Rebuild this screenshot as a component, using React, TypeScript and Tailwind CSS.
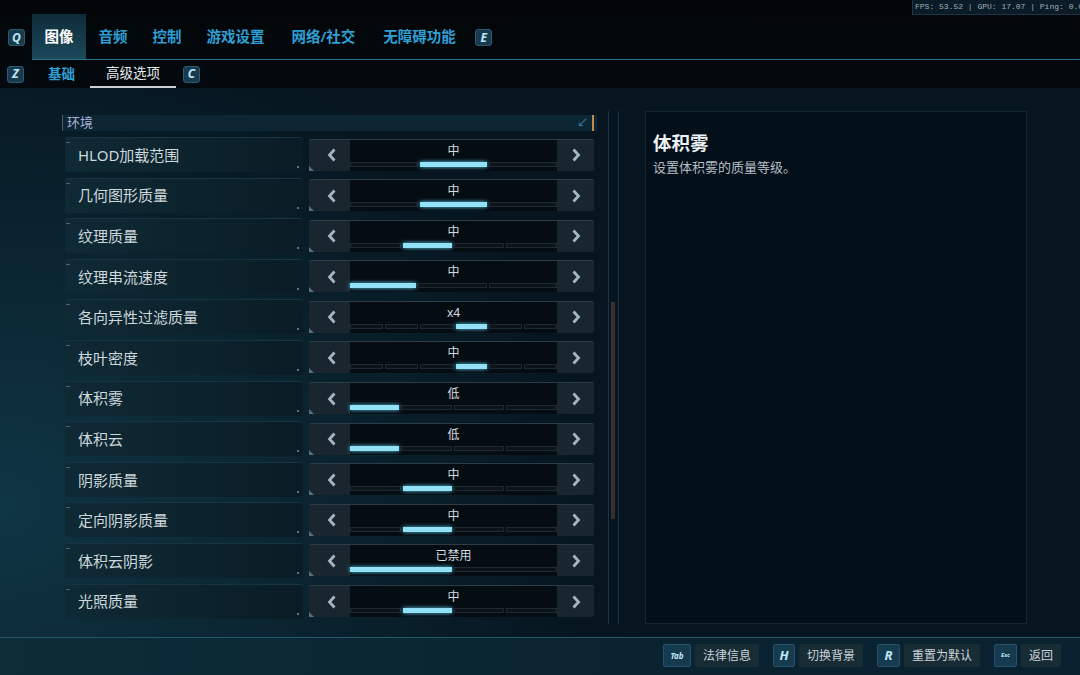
import React from "react";

const rows = [
  { label: "HLOD加载范围", value: "中", segs: 3, active: 1 },
  { label: "几何图形质量", value: "中", segs: 3, active: 1 },
  { label: "纹理质量", value: "中", segs: 4, active: 1 },
  { label: "纹理串流速度", value: "中", segs: 3, active: 0 },
  { label: "各向异性过滤质量", value: "x4", segs: 6, active: 3 },
  { label: "枝叶密度", value: "中", segs: 6, active: 3 },
  { label: "体积雾", value: "低", segs: 4, active: 0 },
  { label: "体积云", value: "低", segs: 4, active: 0 },
  { label: "阴影质量", value: "中", segs: 4, active: 1 },
  { label: "定向阴影质量", value: "中", segs: 4, active: 1 },
  { label: "体积云阴影", value: "已禁用", segs: 2, active: 0 },
  { label: "光照质量", value: "中", segs: 4, active: 1 },
];

const tabs = [
  { label: "图像", cls: "" },
  { label: "音频", cls: "" },
  { label: "控制", cls: "" },
  { label: "游戏设置", cls: "" },
  { label: "网络/社交", cls: "ml-[2px]" },
  { label: "无障碍功能", cls: "ml-[3px]" },
];

const footer = [
  { key: "Tab", label: "法律信息", w: "w-[28px] text-[8px]" },
  { key: "H", label: "切换背景", w: "w-[22px] text-[13px]" },
  { key: "R", label: "重置为默认", w: "w-[23px] text-[13px]" },
  { key: "Esc", label: "返回", w: "w-[23px] text-[6px]" },
];

function KeyBadge({ k }: { k: string }) {
  return (
    <div className="flex h-[17px] w-[17px] items-center justify-center rounded-[3px] border border-[#2b5b72] bg-[#173a4c] text-[12px] font-bold italic text-[#bfe6f8]">
      {k}
    </div>
  );
}

function Chevron({ dir }: { dir: "left" | "right" }) {
  return (
    <svg width="10" height="14" viewBox="0 0 10 14">
      <polyline
        points={dir === "left" ? "7.5,1.5 2.5,7 7.5,12.5" : "2.5,1.5 7.5,7 2.5,12.5"}
        fill="none"
        stroke="#a3b7c2"
        strokeWidth="2.8"
      />
    </svg>
  );
}

function Row({ label, value, segs, active }: (typeof rows)[number]) {
  return (
    <div className="flex h-[35px] items-center">
      <div className="relative ml-[3px] flex h-[35px] w-[238px] items-center rounded-[3px] border-t border-[#173540] bg-[linear-gradient(90deg,#0f2a35_0%,#0c222c_60%,#0a1c25_100%)] pl-[13px] text-[15px] text-[#cdd7dc]">
        <span className="absolute left-[1px] top-[4px] h-[1px] w-[4px] bg-[#4b6470]" />
        <span className="absolute bottom-[4px] right-[4px] h-[2px] w-[2px] bg-[#5a7480]" />
        {label}
      </div>
      <div className="relative ml-[6px] flex h-[32px] w-[285px] rounded-[2px] border-t border-[#2c3b45] bg-[#19262f]">
        <span className="absolute bottom-0 left-0 h-0 w-0 border-b-[5px] border-r-[5px] border-b-[#5b6f7a] border-r-transparent" />
        <div className="flex w-[41px] items-center justify-center pl-[4px]">
          <Chevron dir="left" />
        </div>
        <div className="flex w-[207px] flex-col bg-[#050c12]">
          <div className="flex h-[22px] items-center justify-center text-[12px] text-[#d5dde1]">{value}</div>
          <div className="flex h-[5px] gap-[2px]">
            {Array.from({ length: segs }).map((_, i) =>
              i === active ? (
                <div key={i} className="flex-1 bg-[#93e1f6] shadow-[0_0_4px_#5cc8ea]" />
              ) : (
                <div key={i} className="flex-1 border border-[#1e2a32] bg-[#0c141a]" />
              ),
            )}
          </div>
        </div>
        <div className="flex flex-1 items-center justify-center">
          <Chevron dir="right" />
        </div>
      </div>
    </div>
  );
}

export default function App() {
  return (
    <div
      className="relative h-[675px] w-[1080px] overflow-hidden bg-[radial-gradient(ellipse_70%_90%_at_0%_75%,#0f3643_0%,#0a2531_40%,#061520_80%)] text-white"
      style={{ fontFamily: '"Noto Sans", "Noto Sans CJK SC", sans-serif' }}
    >
      {/* fps overlay */}
      <div
        className="absolute right-0 top-0 h-[15px] w-[168px] overflow-hidden whitespace-nowrap border-b border-l border-[#203444] bg-[#0b1c28] pl-[2px] text-[8px] leading-[14px] text-[#9fb0ba]"
        style={{ fontFamily: '"Liberation Mono", monospace' }}
      >
        FPS: 53.52 | GPU: 17.07 | Ping: 0.0
      </div>

      {/* header */}
      <div className="bg-[linear-gradient(180deg,#020609_0%,#04090d_100%)]">
        <div className="flex h-[60px] items-end">
          <div className="mb-[14px] ml-[8px] mr-[7px]">
            <KeyBadge k="Q" />
          </div>
          <div className="flex flex-1 items-end border-b border-[#2b6f8e]">
            {tabs.map((t, i) => (
              <div
                key={t.label}
                className={
                  "flex h-[45px] shrink-0 items-center whitespace-nowrap px-[12.5px] text-[14.5px] font-semibold " +
                  t.cls +
                  " " +
                  (i === 0
                    ? "bg-[linear-gradient(180deg,#0f2b38_0%,#1b4a5c_100%)] text-white"
                    : "text-[#2f9fd4]")
                }
              >
                {t.label}
              </div>
            ))}
            <div className="mb-[13px] ml-[7px]">
              <KeyBadge k="E" />
            </div>
          </div>
        </div>
        <div className="flex h-[28px] items-center">
          <div className="ml-[7px]">
            <KeyBadge k="Z" />
          </div>
          <div className="ml-[24px] text-[13.5px] font-semibold text-[#2f9fd4]">基础</div>
          <div className="ml-[15px] flex h-[28px] w-[86px] items-center justify-center border-b-2 border-[#c8d2d8] text-[13.5px] text-[#e4eaee]">
            高级选项
          </div>
          <div className="ml-[7px]">
            <KeyBadge k="C" />
          </div>
        </div>
      </div>

      {/* main */}
      <div className="flex h-[549px] pt-[23px]">
        <div className="ml-[62px] mt-[4px] flex w-[535px] flex-col">
          <div className="relative flex h-[16px] items-center border-l border-[#4d5c6a] bg-[#0c2633] pl-[4px] text-[13px] text-[#a8aed6]">
            环境
            <span className="absolute right-[9px] top-[1px] text-[11px] leading-[13px] text-[#3a7fb4]">↙</span>
            <span className="absolute right-[3px] top-0 h-[16px] w-[2px] bg-[#c08a4a]" />
          </div>
          <div className="mt-[6px] flex flex-col gap-[5.6px]">
            {rows.map((r) => (
              <Row key={r.label} {...r} />
            ))}
          </div>
        </div>

        {/* scrollbar */}
        <div className="relative ml-[11px] flex h-[513px] w-[11px] justify-between">
          <div className="w-[1px] bg-[#1d323e]" />
          <div className="w-[1px] bg-[#1d323e]" />
          <div className="absolute left-[3px] top-[191px] h-[217px] w-[4px] bg-[#3a2f2c]" />
        </div>

        {/* details panel */}
        <div className="ml-[26px] h-[513px] w-[382px] border border-[#13262f] bg-[#03101a] px-[7px] pt-[19px]">
          <div className="text-[18.5px] font-bold leading-[24px] text-[#eef2f4]">体积雾</div>
          <div className="mt-[3px] text-[13px] text-[#b5bec3]">设置体积雾的质量等级。</div>
        </div>
      </div>

      {/* footer */}
      <div className="h-[38px] border-t border-[#22596a] bg-[linear-gradient(90deg,#0c2c38_0%,#0a2330_60%,#0a2230_100%)]">
        <div className="flex items-center justify-end gap-[14px] pr-[19px] pt-[6px]">
          {footer.map((f) => (
            <div key={f.key} className="flex items-center gap-[4px]">
              <div
                className={
                  "flex h-[23px] items-center justify-center rounded-[2px] border border-[#24526a] bg-[#163a4e] font-bold italic text-[#bfe6f8] " +
                  f.w
                }
              >
                {f.key}
              </div>
              <div className="flex h-[23px] items-center rounded-[2px] bg-[#182c36] px-[8px] text-[12px] text-[#cbd3d7]">
                {f.label}
              </div>
            </div>
          ))}
        </div>
      </div>
    </div>
  );
}
